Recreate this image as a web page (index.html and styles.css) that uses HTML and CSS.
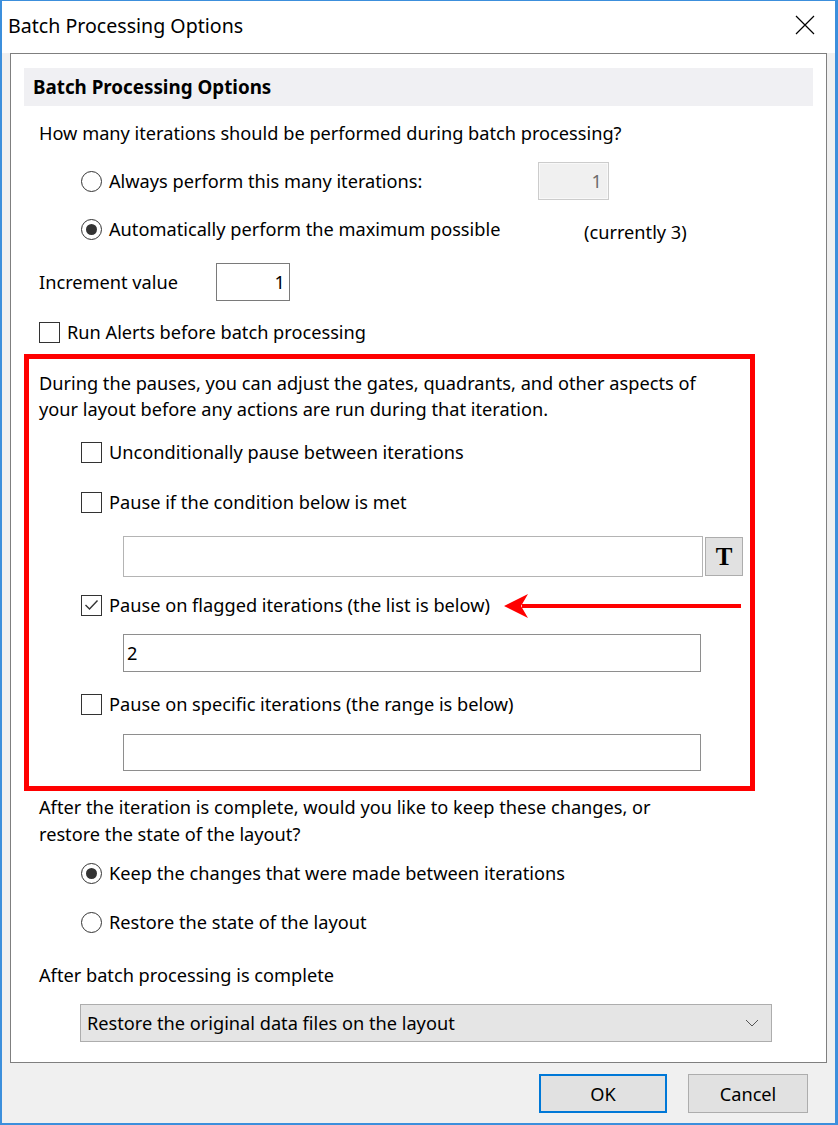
FILE: index.html
```html
<!DOCTYPE html>
<html>
<head>
<meta charset="utf-8">
<title>Batch Processing Options</title>
<link rel="stylesheet" href="styles.css">
</head>
<body>
<div class="window">
  <div class="titlebar">
    <span class="title">Batch Processing Options</span>
    <svg class="close" width="20" height="20" viewBox="0 0 20 20"><path d="M1 1 L19 19 M19 1 L1 19" stroke="#000" stroke-width="1.2" fill="none"/></svg>
  </div>
  <div class="panel">
    <div class="header">Batch Processing Options</div>
    <div class="row q1">How many iterations should be performed during batch processing?</div>
    <div class="row opt r1">
      <span class="radio"></span><span class="label w-always">Always perform this many iterations:</span>
      <span class="field disabled small">1</span>
    </div>
    <div class="row opt r2">
      <span class="radio on"></span><span class="label w-always">Automatically perform the maximum possible</span>
      <span class="currently">(currently 3)</span>
    </div>
    <div class="row incr">
      <span class="label w-incr">Increment value</span>
      <span class="field num">1</span>
    </div>
    <div class="row alerts">
      <span class="check"></span><span class="label">Run Alerts before batch processing</span>
    </div>

    <div class="redbox">
      <p class="para">During the pauses, you can adjust the gates, quadrants, and other aspects of your layout before any actions are run during that iteration.</p>
      <div class="row opt c1"><span class="check"></span><span class="label">Unconditionally pause between iterations</span></div>
      <div class="row opt c2"><span class="check"></span><span class="label">Pause if the condition below is met</span></div>
      <div class="inputrow i1"><span class="field wide cond"></span><span class="tbtn">T</span></div>
      <div class="row opt c3"><span class="check on"><svg width="15" height="12" viewBox="0 0 15 12"><path d="M1.5 6 L5.5 10 L13.5 1.5" stroke="#333" stroke-width="1.4" fill="none"/></svg></span><span class="label">Pause on flagged iterations (the list is below)</span></div>
      <div class="inputrow i2"><span class="field wide text">2</span></div>
      <div class="row opt c4"><span class="check"></span><span class="label">Pause on specific iterations (the range is below)</span></div>
      <div class="inputrow i3"><span class="field wide"></span></div>
      <svg class="arrow" width="242" height="28" viewBox="0 0 242 28"><path d="M237 14 L18 14" stroke="#ff0000" stroke-width="4" fill="none"/><path d="M0 14 L24 2 L17 14 L24 26 Z" fill="#ff0000"/></svg>
    </div>

    <p class="para2">After the iteration is complete, would you like to keep these changes, or restore the state of the layout?</p>
    <div class="row opt k1"><span class="radio on"></span><span class="label">Keep the changes that were made between iterations</span></div>
    <div class="row opt k2"><span class="radio"></span><span class="label">Restore the state of the layout</span></div>
    <div class="row batch">After batch processing is complete</div>
    <div class="select">
      <span>Restore the original data files on the layout</span>
      <svg width="14" height="8" viewBox="0 0 14 8"><path d="M1 1 L7 7 L13 1" stroke="#555" stroke-width="1" fill="none"/></svg>
    </div>
  </div>
  <div class="footer">
    <button class="btn ok">OK</button>
    <button class="btn cancel">Cancel</button>
  </div>
</div>
</body>
</html>
```
FILE: styles.css
```css
* { box-sizing: border-box; }
html, body { margin: 0; padding: 0; background: #fff; }
body {
  width: 838px;
  height: 1125px;
  font-family: "Noto Sans", "Open Sans", sans-serif;
  font-size: 18.2px;
  color: #000;
}
.window {
  width: 838px;
  height: 1125px;
  border: 2px solid #3c8fdc;
  border-top-width: 1px;
  border-right-width: 3px;
  background: #f0f0f0;
  display: flex;
  flex-direction: column;
}
.titlebar {
  height: 52px;
  background: #fff;
  display: flex;
  align-items: center;
  justify-content: space-between;
  padding: 0 20px 4px 6px;
}
.title { font-size: 19.6px; }
.close { display: block; }

.panel {
  margin: 0 8px 0 8px;
  height: 1010px;
  border: 1px solid #7f7f7f;
  background: #fff;
  padding: 14px 13px 0 13px;
  display: flex;
  flex-direction: column;
}
.header {
  height: 38px;
  background: #f0f0f3;
  font-weight: bold;
  font-size: 18.8px;
  padding-left: 9px;
  display: flex;
  align-items: center;
  flex: none;
}
.row {
  display: flex;
  align-items: center;
  flex: none;
  padding-left: 15px;
}
.opt { padding-left: 57px; }
.label { white-space: nowrap; }
.q1 { height: 26px; margin-top: 14px; }
.r1 { height: 38px; margin-top: 16px; }
.r2 { height: 38px; margin-top: 10px; }
.incr { height: 38px; margin-top: 15px; }
.alerts { height: 26px; margin-top: 18px; }

.w-always { width: 429px; }
.w-incr { width: 177px; }

.radio {
  width: 21px; height: 21px;
  border: 1px solid #333;
  border-radius: 50%;
  margin-right: 7px;
  flex: none;
  display: flex;
  align-items: center;
  justify-content: center;
}
.radio.on::after {
  content: "";
  width: 11px; height: 11px;
  border-radius: 50%;
  background: #333;
}
.check {
  width: 21px; height: 21px;
  border: 1px solid #333;
  margin-right: 7px;
  flex: none;
  display: flex;
  align-items: center;
  justify-content: center;
}
.field {
  display: flex;
  align-items: center;
  justify-content: flex-end;
  border: 1px solid #7a7a7a;
  background: #fff;
  padding-right: 7px;
  flex: none;
}
.field.small {
  width: 71px; height: 38px;
  background: #f0f0f0;
  border-color: #cccccc;
  color: #6d6d6d;
  padding-right: 6px;
  box-shadow: inset 0 0 0 1px #f8f8f8;
}
.field.num { width: 74px; height: 38px; padding-right: 4px; }
.currently { margin-left: 46px; margin-top: 6px; }

.redbox {
  position: relative;
  margin-top: 9px;
  width: 731px;
  height: 437px;
  border: 5px solid #ff0000;
  padding: 11px 0 0 10px;
  flex: none;
  display: flex;
  flex-direction: column;
}
.redbox .row { padding-left: 0; }
.redbox .opt { padding-left: 42px; }
.para {
  margin: 0;
  line-height: 26px;
  width: 680px;
}
.c1 { height: 26px; margin-top: 17px; }
.c2 { height: 26px; margin-top: 24px; }
.c3 { height: 26px; margin-top: 15px; }
.c4 { height: 26px; margin-top: 19px; }
.inputrow {
  display: flex;
  align-items: center;
  padding-left: 84px;
  flex: none;
}
.field.wide {
  border-color: #a0a0a0;
  justify-content: flex-start;
  padding-left: 3px;
}
.i1 { margin-top: 21px; height: 41px; }
.i1 .cond { width: 580px; height: 41px; border-color: #b4b4b4; }
.tbtn {
  width: 38px; height: 39px;
  margin-left: 2px;
  background: #e1e1e1;
  border: 1px solid #adadad;
  font-family: "Liberation Serif", "DejaVu Serif", serif;
  font-weight: bold;
  font-size: 25px;
  display: flex;
  align-items: center;
  justify-content: center;
}
.i2 { margin-top: 16px; height: 38px; }
.i2 .field { width: 578px; height: 38px; border-color: #8e8e8e; }
.i3 { margin-top: 17px; height: 37px; }
.i3 .field { width: 578px; height: 37px; border-color: #8e8e8e; }
.arrow {
  position: absolute;
  left: 475px;
  top: 233px;
}

.para2 {
  margin: 3px 0 0 0;
  padding-left: 15px;
  line-height: 27px;
  width: 660px;
  flex: none;
}
.k1 { height: 26px; margin-top: 12px; }
.k2 { height: 26px; margin-top: 23px; }
.batch { height: 26px; margin-top: 27px; }
.select {
  margin: 16px 0 0 56px;
  width: 692px;
  height: 38px;
  background: #e5e5e5;
  border: 1px solid #adadad;
  display: flex;
  align-items: center;
  justify-content: space-between;
  padding: 0 12px 0 6px;
  flex: none;
}
.select svg { display: block; }

.footer {
  flex: 1;
  display: flex;
  justify-content: flex-end;
  align-items: flex-start;
  padding: 11px 27px 0 0;
  gap: 21px;
}
.btn {
  font-family: inherit;
  font-size: 18.2px;
  color: #000;
  background: #e1e1e1;
  height: 39px;
  margin: 0;
}
.ok { width: 128px; border: 2px solid #0078d7; }
.cancel { width: 120px; border: 1px solid #adadad; }
```
